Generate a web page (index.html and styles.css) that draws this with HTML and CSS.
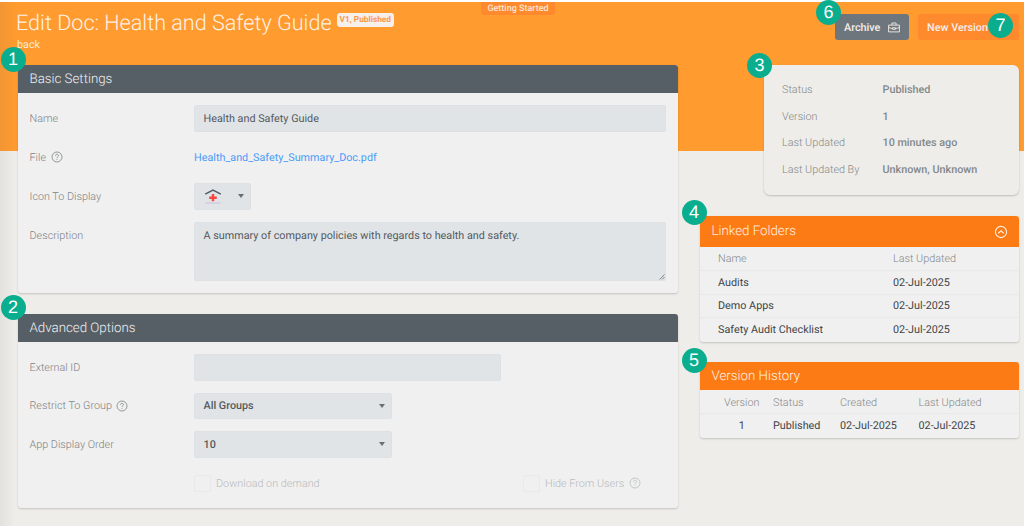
FILE: index.html
```html
<!DOCTYPE html>
<html lang="en">

  <head>
    <meta charset="utf-8">
    <title>Edit Doc: Health and Safety Guide</title>
    <link rel="stylesheet" href="styles.css">
  </head>

  <body>

    <svg class="symbols">
      <symbol id="help" viewBox="0 0 12 12">
        <circle cx="6" cy="6" r="5" fill="none" stroke="currentColor" stroke-width="0.8"/>
        <path d="M4.5 4.8C4.5 3.8 5.2 3.3 6 3.3S7.5 3.8 7.5 4.7C7.5 5.7 6 5.7 6 6.9M6 7.9V8.8" fill="none" stroke="currentColor" stroke-width="0.8"/>
      </symbol>
    </svg>

    <div class="getting-started">Getting Started</div>

    <header class="page-header">
      <div class="heading">
        <h1><span class="title">Edit Doc: Health and Safety Guide</span> <span class="tag">V1, Published</span></h1>
        <a class="back">back</a>
      </div>
      <div class="actions">
        <button class="btn archive">
          <span>Archive</span>
          <svg class="briefcase" viewBox="0 0 12 11">
            <path d="M.6 3.1H11.4V9.9H.6ZM3.9 3.1V1H8.1V3.1M.6 5.6L4.6 6.6M7.4 6.6L11.4 5.6M4.6 5.7H7.4V7.3H4.6Z" fill="none" stroke="currentColor" stroke-width="0.9" stroke-linejoin="round"/>
          </svg>
          <span class="marker marker-corner">6</span>
        </button>
        <button class="btn new-version">
          <span>New Version</span>
          <span class="marker marker-end">7</span>
        </button>
      </div>
    </header>

    <main class="columns">

      <div class="left">

        <section class="card">
          <span class="marker">1</span>
          <h2 class="dark">Basic Settings</h2>
          <div class="form">
            <div class="label">Name</div>
            <div class="control">Health and Safety Guide</div>

            <div class="label">File <svg class="help"><use href="#help"/></svg></div>
            <div class="plain"><a class="file">Health_and_Safety_Summary_Doc.pdf</a></div>

            <div class="label">Icon To Display</div>
            <div class="control select icon-select">
              <svg class="doc-icon" viewBox="0 0 18 16">
                <path d="M1.2 6.2L9 2L16.8 6.2" fill="none" stroke="#4f5d68" stroke-width="1.5"/>
                <path d="M9 6.1V13.3M5.2 9.7H12.8" fill="none" stroke="#fb4540" stroke-width="2.4"/>
                <path d="M1.5 15H16.5" stroke="#cbb9df" stroke-width="0.9"/>
              </svg>
              <i class="caret"></i>
            </div>

            <div class="label">Description</div>
            <div class="control description">
              <span>A summary of company policies with regards to health and safety.</span>
              <svg class="grip" viewBox="0 0 6 6"><path d="M.5 5.5L5.5 .5M3 5.5L5.5 3" stroke="#6d7072" stroke-width="0.8"/></svg>
            </div>
          </div>
        </section>

        <section class="card advanced">
          <span class="marker">2</span>
          <h2 class="dark">Advanced Options</h2>
          <div class="form">
            <div class="label">External ID</div>
            <div class="control external"></div>

            <div class="label">Restrict To Group <svg class="help"><use href="#help"/></svg></div>
            <div class="control select">All Groups <i class="caret"></i></div>

            <div class="label">App Display Order</div>
            <div class="control select">10 <i class="caret"></i></div>

            <div class="checks">
              <div class="check"><i class="box"></i>Download on demand</div>
              <div class="check"><i class="box"></i>Hide From Users <svg class="help"><use href="#help"/></svg></div>
            </div>
          </div>
        </section>

      </div>

      <div class="right">

        <section class="summary">
          <span class="marker">3</span>
          <dl>
            <dt>Status</dt><dd>Published</dd>
            <dt>Version</dt><dd>1</dd>
            <dt>Last Updated</dt><dd>10 minutes ago</dd>
            <dt>Last Updated By</dt><dd>Unknown, Unknown</dd>
          </dl>
        </section>

        <section class="card linked">
          <span class="marker">4</span>
          <h2 class="orange">Linked Folders
            <svg class="collapse" viewBox="0 0 14 14">
              <circle cx="7" cy="7" r="5.6" fill="none" stroke="currentColor" stroke-width="1.1"/>
              <path d="M4.3 8.2L7 5.7L9.7 8.2" fill="none" stroke="currentColor" stroke-width="1.2"/>
            </svg>
          </h2>
          <table>
            <tr><th class="folder">Name</th><th>Last Updated</th></tr>
            <tr><td>Audits</td><td>02-Jul-2025</td></tr>
            <tr><td>Demo Apps</td><td>02-Jul-2025</td></tr>
            <tr><td>Safety Audit Checklist</td><td>02-Jul-2025</td></tr>
          </table>
        </section>

        <section class="card history">
          <span class="marker">5</span>
          <h2 class="orange">Version History</h2>
          <table>
            <tr><th class="version">Version</th><th class="status">Status</th><th class="created">Created</th><th>Last Updated</th></tr>
            <tr><td class="version">1</td><td>Published</td><td>02-Jul-2025</td><td>02-Jul-2025</td></tr>
          </table>
        </section>

      </div>

    </main>

  </body>

</html>
```

FILE: styles.css
```css
*
{
  box-sizing: border-box;
}

body
{
  margin: 0;
  height: 526px;
  overflow: hidden;
  position: relative;
  font-family: Roboto, "Liberation Sans", sans-serif;
  font-size: 10.8px;
  text-rendering: geometricPrecision;
  color: #55595c;
  background: linear-gradient(#fff 2px, #ff9b2f 2px, #ff9b2f 151px, #eeede9 151px);
}

/* shadow cast by the side menu */
body::before
{
  content: "";
  position: absolute;
  left: 0;
  top: 2px;
  width: 16px;
  height: 524px;
  background: linear-gradient(to right, rgba(80, 90, 100, 0.08), rgba(80, 90, 100, 0));
}

.symbols
{
  display: none;
}

h1, h2, dl, dd
{
  margin: 0;
  font-weight: 300;
}

.getting-started
{
  position: absolute;
  left: 481px;
  top: 2px;
  width: 74px;
  height: 13px;
  border-radius: 0 0 3px 3px;
  background: #ff8a2e;
  color: #fbe6d3;
  font-size: 9px;
  font-weight: 500;
  line-height: 14px;
  text-align: center;
}

.page-header
{
  display: flex;
  justify-content: space-between;
  height: 65px;
  padding: 10px 5px 0 16px;
}

h1
{
  display: flex;
  gap: 5px;
  height: 27px;
  font-size: 21.6px;
  line-height: 27px;
  color: #fff0e2;
}

.tag
{
  height: 14px;
  margin-top: 3px;
  padding: 0 3px;
  border-radius: 3px;
  background: #f6f0ea;
  color: #fb9650;
  font-size: 8.3px;
  font-weight: 700;
  line-height: 15px;
}

.back
{
  display: block;
  margin-left: 1px;
  color: #fbeada;
  line-height: 16px;
}

.actions
{
  display: flex;
  gap: 9px;
  padding-top: 4px;
}

.btn
{
  position: relative;
  display: flex;
  align-items: center;
  justify-content: space-between;
  height: 26px;
  padding: 0 9px;
  border: 0;
  border-radius: 3px;
  color: #f5eee7;
  font: 500 10.8px Roboto, "Liberation Sans", sans-serif;
  text-rendering: geometricPrecision;
}

.archive
{
  width: 74px;
  background: #6e767d;
}

.new-version
{
  width: 101px;
  background: #ff892d;
}

.briefcase
{
  width: 12px;
  height: 11px;
}

.marker
{
  position: absolute;
  left: -17px;
  top: -18px;
  z-index: 2;
  width: 25px;
  height: 25px;
  border-radius: 50%;
  background: #0aae8e;
  color: #fff;
  font-family: "Liberation Sans", sans-serif;
  font-size: 18px;
  font-weight: 400;
  line-height: 25px;
  text-align: center;
}

.advanced .marker
{
  top: -19.5px;
}

.summary .marker
{
  top: -12px;
}

.linked .marker
{
  left: -18px;
  top: -16.5px;
}

.history .marker
{
  left: -18px;
  top: -14.5px;
}

.btn .marker-corner
{
  left: -19px;
  top: -14px;
}

.btn .marker-end
{
  left: 70px;
  top: -1px;
}

.columns
{
  display: flex;
  gap: 22px;
  padding: 0 5.5px 0 17.5px;
}

.left
{
  width: 660px;
}

.right
{
  flex: 1;
}

.card
{
  position: relative;
  height: 228px;
  border-radius: 3px;
  background: #f0f0f0;
  box-shadow: 0 1px 2px rgba(0, 0, 0, 0.18);
}

.advanced
{
  height: 194px;
  margin-top: 21px;
}

h2
{
  display: flex;
  align-items: center;
  justify-content: space-between;
  height: 28px;
  padding: 0 12px;
  border-radius: 3px 3px 0 0;
  font-size: 13.3px;
}

.dark
{
  background: #565e66;
  color: #f0f1f2;
}

.orange
{
  background: #fd7b15;
  color: #fff0e2;
}

.form
{
  display: grid;
  grid-template-columns: 164.5px 1fr;
  row-gap: 12.6px;
  padding: 12px;
}

.advanced .form
{
  row-gap: 12.1px;
}

.label
{
  display: flex;
  align-items: center;
  height: 26.5px;
  font-weight: 300;
  color: #7d8184;
}

.help
{
  width: 12px;
  height: 12px;
  margin-left: 4.5px;
}

.plain, .control
{
  display: flex;
  align-items: center;
  height: 26.5px;
}

.control
{
  padding: 0 9.5px;
  border-radius: 3px;
  background: #e0e4e7;
  box-shadow: inset 0 0 0 1px #dde1e4;
}

.file
{
  color: #4a9cf8;
}

.select
{
  justify-content: space-between;
  width: 197.5px;
  padding-right: 7px;
  font-weight: 500;
}

.icon-select
{
  width: 56.5px;
}

.doc-icon
{
  width: 18px;
  height: 16px;
}

.caret
{
  border: 3px solid transparent;
  border-top: 4px solid #6b6e70;
  border-bottom: 0;
}

.description
{
  position: relative;
  align-items: flex-start;
  height: 59px;
  padding-top: 7px;
}

.grip
{
  position: absolute;
  right: 1px;
  bottom: 1px;
  width: 6px;
  height: 6px;
}

.external
{
  width: 307px;
}

.checks
{
  grid-column: 2;
  display: flex;
  height: 27px;
  color: #b8babb;
  font-weight: 300;
}

.check
{
  display: flex;
  align-items: center;
  width: 329px;
}

.box
{
  width: 16.5px;
  height: 16.5px;
  margin-right: 5.5px;
  border: 1px solid #e9e9e9;
  border-radius: 2px;
}

.summary
{
  position: relative;
  width: 254.5px;
  height: 130px;
  margin-left: auto;
  padding: 12px 18px;
  border-radius: 6px;
  background: #eeede9;
  box-shadow: 0 1px 2px rgba(0, 0, 0, 0.2);
}

.summary dl
{
  display: grid;
  grid-template-columns: 100.5px 1fr;
  line-height: 26.7px;
}

dt
{
  font-weight: 300;
  color: #84888a;
}

dd
{
  font-weight: 500;
  color: #83888b;
}

.linked
{
  height: 126px;
  margin-top: 21px;
}

.linked h2
{
  height: 31px;
}

.collapse
{
  width: 14px;
  height: 14px;
  margin-right: -1px;
}

.history
{
  height: 76px;
  margin-top: 20px;
}

table
{
  width: 100%;
  border-collapse: collapse;
  table-layout: fixed;
}

th, td
{
  height: 23.6px;
  padding: 0;
  text-align: left;
}

th
{
  font-weight: 300;
  color: #84888a;
}

td
{
  border-top: 1px solid #e9e9e9;
  color: #3f4447;
}

tr > :first-child
{
  padding-left: 18.5px;
}

.folder
{
  width: 193.5px;
}

.history th
{
  padding-top: 1px;
}

.history tr > .version
{
  width: 73.5px;
  padding-left: 11px;
  text-align: center;
}

.status
{
  width: 67px;
}

.created
{
  width: 78.5px;
}
```
